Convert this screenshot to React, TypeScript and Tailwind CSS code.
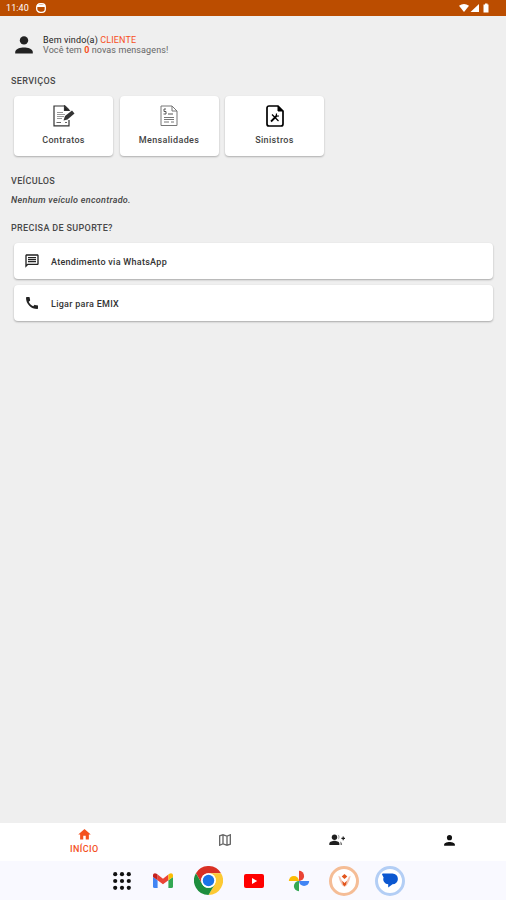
import type { ReactNode } from 'react';
import { MdHome, MdOutlineMap, MdOutlineMessage, MdCall } from 'react-icons/md';

function PersonIcon({ className }: { className?: string }) {
  return (
    <svg className={className} viewBox="0 0 18 18" fill="currentColor">
      <circle cx="9" cy="4.4" r="4.2" />
      <path d="M0.2 17.6V16C0.2 12.6 5.4 11.4 9 11.4S17.8 12.6 17.8 16V17.6Z" />
    </svg>
  );
}

function ContractIcon() {
  return (
    <svg width="22" height="22" viewBox="0 0 22 22" fill="none" stroke="#333" strokeWidth="1.2">
      <path d="M16 15V20.8H1V1H12L16 5" />
      <path d="M11.5 1V5.5H16Z" fill="#222" />
      <path d="M4 7.5H10M4 9.5H12M4 11.5H11M4 13.5H9" stroke="#999" />
      <path d="M10.5 15.5L12 11L19 5.5L21.5 8.5L14.5 14.5Z" fill="#333" stroke="none" />
      <path d="M3.5 17.5H8M12 17.5H14" stroke="#666" />
    </svg>
  );
}

function BillIcon() {
  return (
    <svg width="18" height="22" viewBox="0 0 18 22" fill="none" stroke="#777" strokeWidth="1">
      <path d="M1 1H12L17 6V20.5H1Z" />
      <path d="M12 1V6H17" />
      <path d="M6 4H4V6.5H6V9H3.5M8 9H13" stroke="#555" />
      <path d="M4 12.5H14M4 14.5H14M4 17H9M11 17H14" />
    </svg>
  );
}

function ClaimIcon() {
  return (
    <svg width="18" height="22" viewBox="0 0 18 22" fill="none" stroke="#000" strokeWidth="1.7">
      <path d="M3 1H12L17 6V19A2 2 0 0 1 15 21H3A2 2 0 0 1 1 19V3A2 2 0 0 1 3 1Z" />
      <path d="M12 1V6H17Z" fill="#000" strokeWidth="1" />
      <path d="M5 16.5L10.5 11" strokeWidth="1.8" />
      <path d="M6 9.5L12.5 16" strokeWidth="1.2" />
      <path d="M10.5 8.5L10.3 11.2L13 11" strokeWidth="1.2" />
    </svg>
  );
}

function GroupIcon() {
  return (
    <svg width="16" height="12" viewBox="0 0 16 12" fill="#1f1f1f">
      <circle cx="5.5" cy="3.2" r="2.7" />
      <path d="M0.3 11V9.7C0.3 7.7 3.8 6.8 5.5 6.8S10.4 7.7 10.4 9.7V11Z" />
      <path d="M8.7 0.8C10.9 0.6 11.2 4.8 8.9 5.6C9.8 4.2 9.8 2.2 8.7 0.8Z" fill="#999" />
      <path d="M11.2 7.5C13 8.5 13.2 9.7 13 11H11.6Z" fill="#777" />
      <path d="M13.6 2.6H14.8V3.8H16V5H14.8V6.2H13.6V5H12.4V3.8H13.6Z" />
    </svg>
  );
}

function AppsIcon() {
  return (
    <svg width="18" height="18" viewBox="0 0 18 18" fill="#111">
      {[2.2, 9, 15.8].map((y) => [2.2, 9, 15.8].map((x) => <circle key={`${x}-${y}`} cx={x} cy={y} r="2.1" />))}
    </svg>
  );
}

function GmailIcon() {
  return (
    <svg width="20" height="15" viewBox="0 0 20 15">
      <path d="M0 4L4.6 7.3V15H1.5A1.5 1.5 0 0 1 0 13.5Z" fill="#4285f4" />
      <path d="M20 4L15.4 7.3V15H18.5A1.5 1.5 0 0 0 20 13.5Z" fill="#34a853" />
      <path d="M4.6 1.6L10 5.7L15.4 1.6V7.3L10 11.3L4.6 7.3Z" fill="#ea4335" />
      <path d="M0 2.3C0 .2 2.2-.5 3.6.8L4.6 1.6V7.3L0 4Z" fill="#c5221f" />
      <path d="M20 2.3C20 .2 17.8-.5 16.4.8L15.4 1.6V7.3L20 4Z" fill="#fbbc04" />
    </svg>
  );
}

function ChromeIcon() {
  return (
    <svg width="29" height="29" viewBox="0 0 48 48">
      <circle cx="24" cy="24" r="24" fill="#fff" />
      <path d="M3.2 12A24 24 0 0 1 44.8 12H24A12 12 0 0 0 13.6 30Z" fill="#d93025" />
      <path d="M44.8 12A24 24 0 0 1 24 48L34.4 30A12 12 0 0 0 24 12Z" fill="#fcc934" />
      <path d="M24 48A24 24 0 0 1 3.2 12L13.6 30A12 12 0 0 0 34.4 30Z" fill="#1e8e3e" />
      <circle cx="24" cy="24" r="12" fill="#fff" />
      <circle cx="24" cy="24" r="9.5" fill="#1a73e8" />
    </svg>
  );
}

function YoutubeIcon() {
  return (
    <svg width="20" height="14" viewBox="0 0 20 14">
      <rect width="20" height="14" rx="2" fill="#f00" />
      <path d="M8 4L13.2 7L8 10Z" fill="#fff" />
    </svg>
  );
}

function PhotosIcon() {
  return (
    <svg width="22" height="22" viewBox="0 0 22 22">
      <path d="M11 0.8A5.1 5.1 0 0 1 11 11Z" fill="#ea4335" />
      <path d="M21.2 11A5.1 5.1 0 0 1 11 11Z" fill="#4285f4" />
      <path d="M11 21.2A5.1 5.1 0 0 1 11 11Z" fill="#34a853" />
      <path d="M0.8 11A5.1 5.1 0 0 1 11 11Z" fill="#fbbc04" />
    </svg>
  );
}

function EmixIcon() {
  return (
    <svg width="13" height="13" viewBox="0 0 12 12" fill="#e2551c">
      <path d="M6 0L8.6 2.2L6 4.6L3.4 2.2Z" />
      <path d="M0.3 1.5L2 2.6L4.2 7L6 8.8L7.8 7L10 2.6L11.7 1.5L10.5 6L8.2 10.3L6 12L3.8 10.3L1.5 6Z" fillOpacity=".35" />
      <path d="M3.9 6.2L6 8.2L8.1 6.2L7.4 10L6 11.4L4.6 10Z" />
    </svg>
  );
}

function MessagesIcon() {
  return (
    <svg width="16" height="15" viewBox="0 0 16 15" fill="#0b57d0">
      <path d="M1 .5H10.5A5.2 5.2 0 0 1 10.5 11.3L6.2 14.5V11.3A5 5 0 0 1 1.6 4.5L.2 1.8C-.1 1 .2.5 1 .5Z" />
    </svg>
  );
}

function SectionTitle({ children }: { children: ReactNode }) {
  return <h2 className="text-[9px] leading-[10px] font-medium tracking-[0.34px] text-[#484848]">{children}</h2>;
}

function ServiceCard({ icon, label }: { icon: ReactNode; label: string }) {
  return (
    <div className="flex h-[60px] w-[99px] flex-col items-center rounded-[4px] bg-white pt-[9px] shadow-[0_1px_2px_rgba(0,0,0,0.28)]">
      {icon}
      <span className="mt-[8px] text-[9px] leading-[10px] font-medium tracking-[0.35px] text-[#444]">{label}</span>
    </div>
  );
}

function SupportRow({ icon, label }: { icon: ReactNode; label: string }) {
  return (
    <div className="flex h-[36px] items-center rounded-[4px] bg-white pl-[10px] text-[#222] shadow-[0_1px_2px_rgba(0,0,0,0.3)]">
      {icon}
      <span className="ml-[11px] pt-px text-[9px] leading-[10px] font-medium tracking-[0.28px] text-[#333]">{label}</span>
    </div>
  );
}

export default function App() {
  return (
    <div className="flex h-[900px] w-[506px] flex-col overflow-hidden bg-[#efefef] font-['Roboto',sans-serif]">
      <header className="flex h-[16px] shrink-0 items-center bg-[#bb4d00] pr-[16px] pl-[6px] text-white">
        <span className="pt-px text-[9px] leading-[15px] tracking-[0.1px]">11:40</span>
        <svg className="ml-[7px]" width="10" height="10" viewBox="0 0 10 10">
          <rect x=".7" y=".7" width="8.6" height="8.6" rx="3.4" fill="none" stroke="#fff" strokeWidth="1.3" />
          <path d="M1 1.5H9V4H1Z" fill="#fff" />
        </svg>
        <svg className="ml-auto" width="31" height="10" viewBox="0 0 31 10" fill="#fff">
          <path d="M0 2.8Q5 -1 10 2.8L5 9Z" />
          <path d="M20 1V9H11.5Z" />
          <path d="M25 1.5H26V.5H28.5V1.5H29.5V9.5H24.5V1.5Z" />
        </svg>
      </header>

      <main className="flex-1 px-[11px] pt-[16px]">
        <div className="flex h-[26px] items-center">
          <PersonIcon className="ml-[4px] size-[18px] text-[#222]" />
          <div className="ml-[10px] text-[9px] leading-[10px] text-[#666]">
            <p className="tracking-[0.13px] text-[#222]">
              Bem vindo(a) <span className="text-[#f7501e]">CLIENTE</span>
            </p>
            <p className="tracking-[0.1px]">
              Você tem <span className="font-bold text-[#f7501e]">0</span> novas mensagens!
            </p>
          </div>
        </div>

        <div className="mt-[18px]">
          <SectionTitle>SERVIÇOS</SectionTitle>
        </div>
        <div className="mt-[10px] flex gap-[6.5px] pl-[3px]">
          <ServiceCard icon={<ContractIcon />} label="Contratos" />
          <ServiceCard icon={<BillIcon />} label="Mensalidades" />
          <ServiceCard icon={<ClaimIcon />} label="Sinistros" />
        </div>

        <div className="mt-[20px]">
          <SectionTitle>VEÍCULOS</SectionTitle>
        </div>
        <p className="mt-[9px] text-[9px] leading-[10px] font-medium tracking-[0.3px] text-[#444] italic">
          Nenhum veículo encontrado.
        </p>

        <div className="mt-[18px]">
          <SectionTitle>PRECISA DE SUPORTE?</SectionTitle>
        </div>
        <div className="mt-[10px] flex flex-col gap-[6px] pr-[2px] pl-[3px]">
          <SupportRow icon={<MdOutlineMessage className="size-[16px]" />} label="Atendimento via WhatsApp" />
          <SupportRow icon={<MdCall className="size-[16px]" />} label="Ligar para EMIX" />
        </div>
      </main>

      <nav className="flex h-[38px] shrink-0 bg-white">
        <div className="flex flex-[3] flex-col items-center pt-[4px] text-[#f4511e]">
          <MdHome className="size-[15px]" />
          <span className="mt-[2px] text-[9px] leading-[10px] font-medium tracking-[0.4px]">INÍCIO</span>
        </div>
        <div className="flex flex-[2] justify-center pt-[9px] text-[#666]">
          <MdOutlineMap className="size-[16px]" />
        </div>
        <div className="flex flex-[2] justify-center pt-[11px]">
          <GroupIcon />
        </div>
        <div className="flex flex-[2] justify-center pt-[12px] text-[#111]">
          <PersonIcon className="size-[11px]" />
        </div>
      </nav>

      <footer className="flex h-[39px] shrink-0 items-center bg-[#f9f9ff] pl-[99px]">
        <div className="flex w-[45px] justify-center">
          <AppsIcon />
        </div>
        <div className="flex w-[38px] justify-center">
          <GmailIcon />
        </div>
        <div className="ml-[4px] flex w-[45px] justify-center">
          <ChromeIcon />
        </div>
        <div className="flex w-[45px] justify-center">
          <YoutubeIcon />
        </div>
        <div className="flex w-[45px] justify-center">
          <PhotosIcon />
        </div>
        <div className="flex w-[46px] justify-center">
          <div className="flex size-[30px] items-center justify-center rounded-full border-3 border-[#f5bd96] bg-white">
            <EmixIcon />
          </div>
        </div>
        <div className="flex w-[45px] justify-center">
          <div className="flex size-[30px] items-center justify-center rounded-full border-3 border-[#b3cef5] bg-white">
            <MessagesIcon />
          </div>
        </div>
      </footer>
    </div>
  );
}
